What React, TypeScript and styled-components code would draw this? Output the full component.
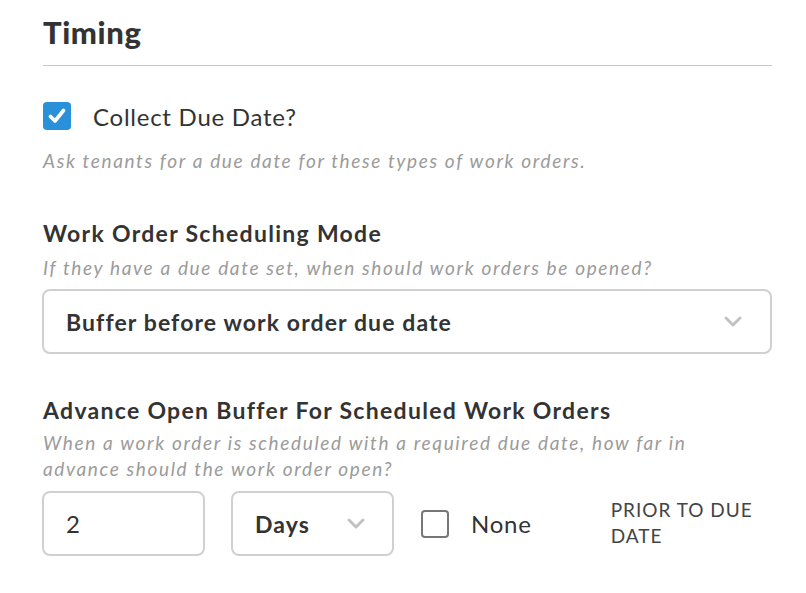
import React, { useState } from "react";
import styled, { createGlobalStyle } from "styled-components";

const GlobalStyle = createGlobalStyle`
  html, body {
    margin: 0;
    padding: 0;
    background: #ffffff;
  }
  body {
    font-family: "Lato", "Open Sans", sans-serif;
    color: #333333;
  }
`;

const Page = styled.div`
  padding: 12px 34px 40px 42px;
  width: 730px;
`;

const SectionTitle = styled.h2`
  font-size: 31px;
  font-weight: 900;
  line-height: 40px;
  letter-spacing: 0.6px;
  margin: 0 0 13px 1px;
  color: #333;
`;

const Divider = styled.div`
  height: 1px;
  background: #c9c9c9;
  margin-left: 1px;
`;

const CheckRow = styled.label`
  display: flex;
  align-items: center;
  gap: 22px;
  margin: 36px 0 0 1px;
  height: 28px;
  cursor: pointer;
`;

const Box = styled.span<{ checked?: boolean }>`
  display: inline-flex;
  align-items: center;
  justify-content: center;
  box-sizing: border-box;
  width: 28px;
  height: 28px;
  flex: none;
  border-radius: 4px;
  background: ${(p) => (p.checked ? "#2a90d9" : "#fff")};
  border: ${(p) => (p.checked ? "none" : "2px solid #777")};
`;

const CheckText = styled.span`
  font-size: 24px;
  letter-spacing: 0.75px;
  color: #333;
`;

const Help = styled.p<{ gap?: number }>`
  font-style: italic;
  font-size: 19px;
  line-height: 24px;
  letter-spacing: 1.65px;
  color: #9b9b9b;
  margin: ${(p) => p.gap ?? 9}px 0 0 1px;
`;

const HelpTall = styled(Help)`
  line-height: 26px;
`;

const FieldLabel = styled.div<{ gap: number }>`
  font-size: 23px;
  font-weight: 700;
  line-height: 28px;
  letter-spacing: 1.3px;
  color: #333;
  margin: ${(p) => p.gap}px 0 0 1px;
`;

const Select = styled.div<{ width?: number; chevronRight?: number }>`
  box-sizing: border-box;
  display: flex;
  align-items: center;
  justify-content: space-between;
  height: 65px;
  width: ${(p) => (p.width ? `${p.width}px` : "100%")};
  padding: 0 ${(p) => p.chevronRight ?? 28}px 0 22px;
  border: 2px solid #d0d0d0;
  border-radius: 8px;
  background: #fff;
  font-size: 23px;
  font-weight: 700;
  letter-spacing: 1.1px;
  color: #333;
  cursor: pointer;
`;

const TopSelect = styled(Select)`
  margin-top: 9px;
`;

const NumberBox = styled.div`
  box-sizing: border-box;
  display: flex;
  align-items: center;
  width: 163px;
  height: 65px;
  padding-left: 22px;
  border: 2px solid #d0d0d0;
  border-radius: 8px;
  font-size: 24px;
  color: #333;
`;

const BufferRow = styled.div`
  display: flex;
  align-items: center;
  margin-top: 9px;
`;

const RowGap = styled.div<{ w: number }>`
  width: ${(p) => p.w}px;
  flex: none;
`;

const NoneRow = styled(CheckRow)`
  margin: 0;
`;

const PriorText = styled.div`
  width: 160px;
  font-size: 19px;
  line-height: 26px;
  letter-spacing: 1px;
  color: #444;
  text-transform: uppercase;
  margin-bottom: 2px;
`;

const Chevron = () => (
  <svg width="18" height="11" viewBox="0 0 18 11">
    <path
      d="M2 2 L9 9 L16 2"
      fill="none"
      stroke="#c2c2c2"
      strokeWidth="3"
      strokeLinecap="round"
      strokeLinejoin="round"
    />
  </svg>
);

const Check = () => (
  <svg width="18" height="16" viewBox="0 0 18 16">
    <path
      d="M2.5 8.5 L7 13 L15.5 2.5"
      fill="none"
      stroke="#fff"
      strokeWidth="3.6"
      strokeLinecap="round"
      strokeLinejoin="round"
    />
  </svg>
);

export default function App() {
  const [collect, setCollect] = useState(true);
  const [none, setNone] = useState(false);

  return (
    <>
      <GlobalStyle />
      <Page>
        <SectionTitle>Timing</SectionTitle>
        <Divider />

        <CheckRow onClick={() => setCollect(!collect)}>
          <Box checked={collect}>{collect && <Check />}</Box>
          <CheckText>Collect Due Date?</CheckText>
        </CheckRow>
        <Help gap={19}>
          Ask tenants for a due date for these types of work orders.
        </Help>

        <FieldLabel gap={46}>Work Order Scheduling Mode</FieldLabel>
        <Help>If they have a due date set, when should work orders be opened?</Help>
        <TopSelect chevronRight={28}>
          <span>Buffer before work order due date</span>
          <Chevron />
        </TopSelect>

        <FieldLabel gap={42}>Advance Open Buffer For Scheduled Work Orders</FieldLabel>
        <HelpTall gap={6}>
          When a work order is scheduled with a required due date, how far in
          <br />
          advance should the work order open?
        </HelpTall>

        <BufferRow>
          <NumberBox>2</NumberBox>
          <RowGap w={26} />
          <Select width={163} chevronRight={27}>
            <span>Days</span>
            <Chevron />
          </Select>
          <RowGap w={27} />
          <NoneRow as="div" onClick={() => setNone(!none)}>
            <Box checked={none}>{none && <Check />}</Box>
            <CheckText>None</CheckText>
          </NoneRow>
          <RowGap w={79} />
          <PriorText>Prior to due date</PriorText>
        </BufferRow>
      </Page>
    </>
  );
}
